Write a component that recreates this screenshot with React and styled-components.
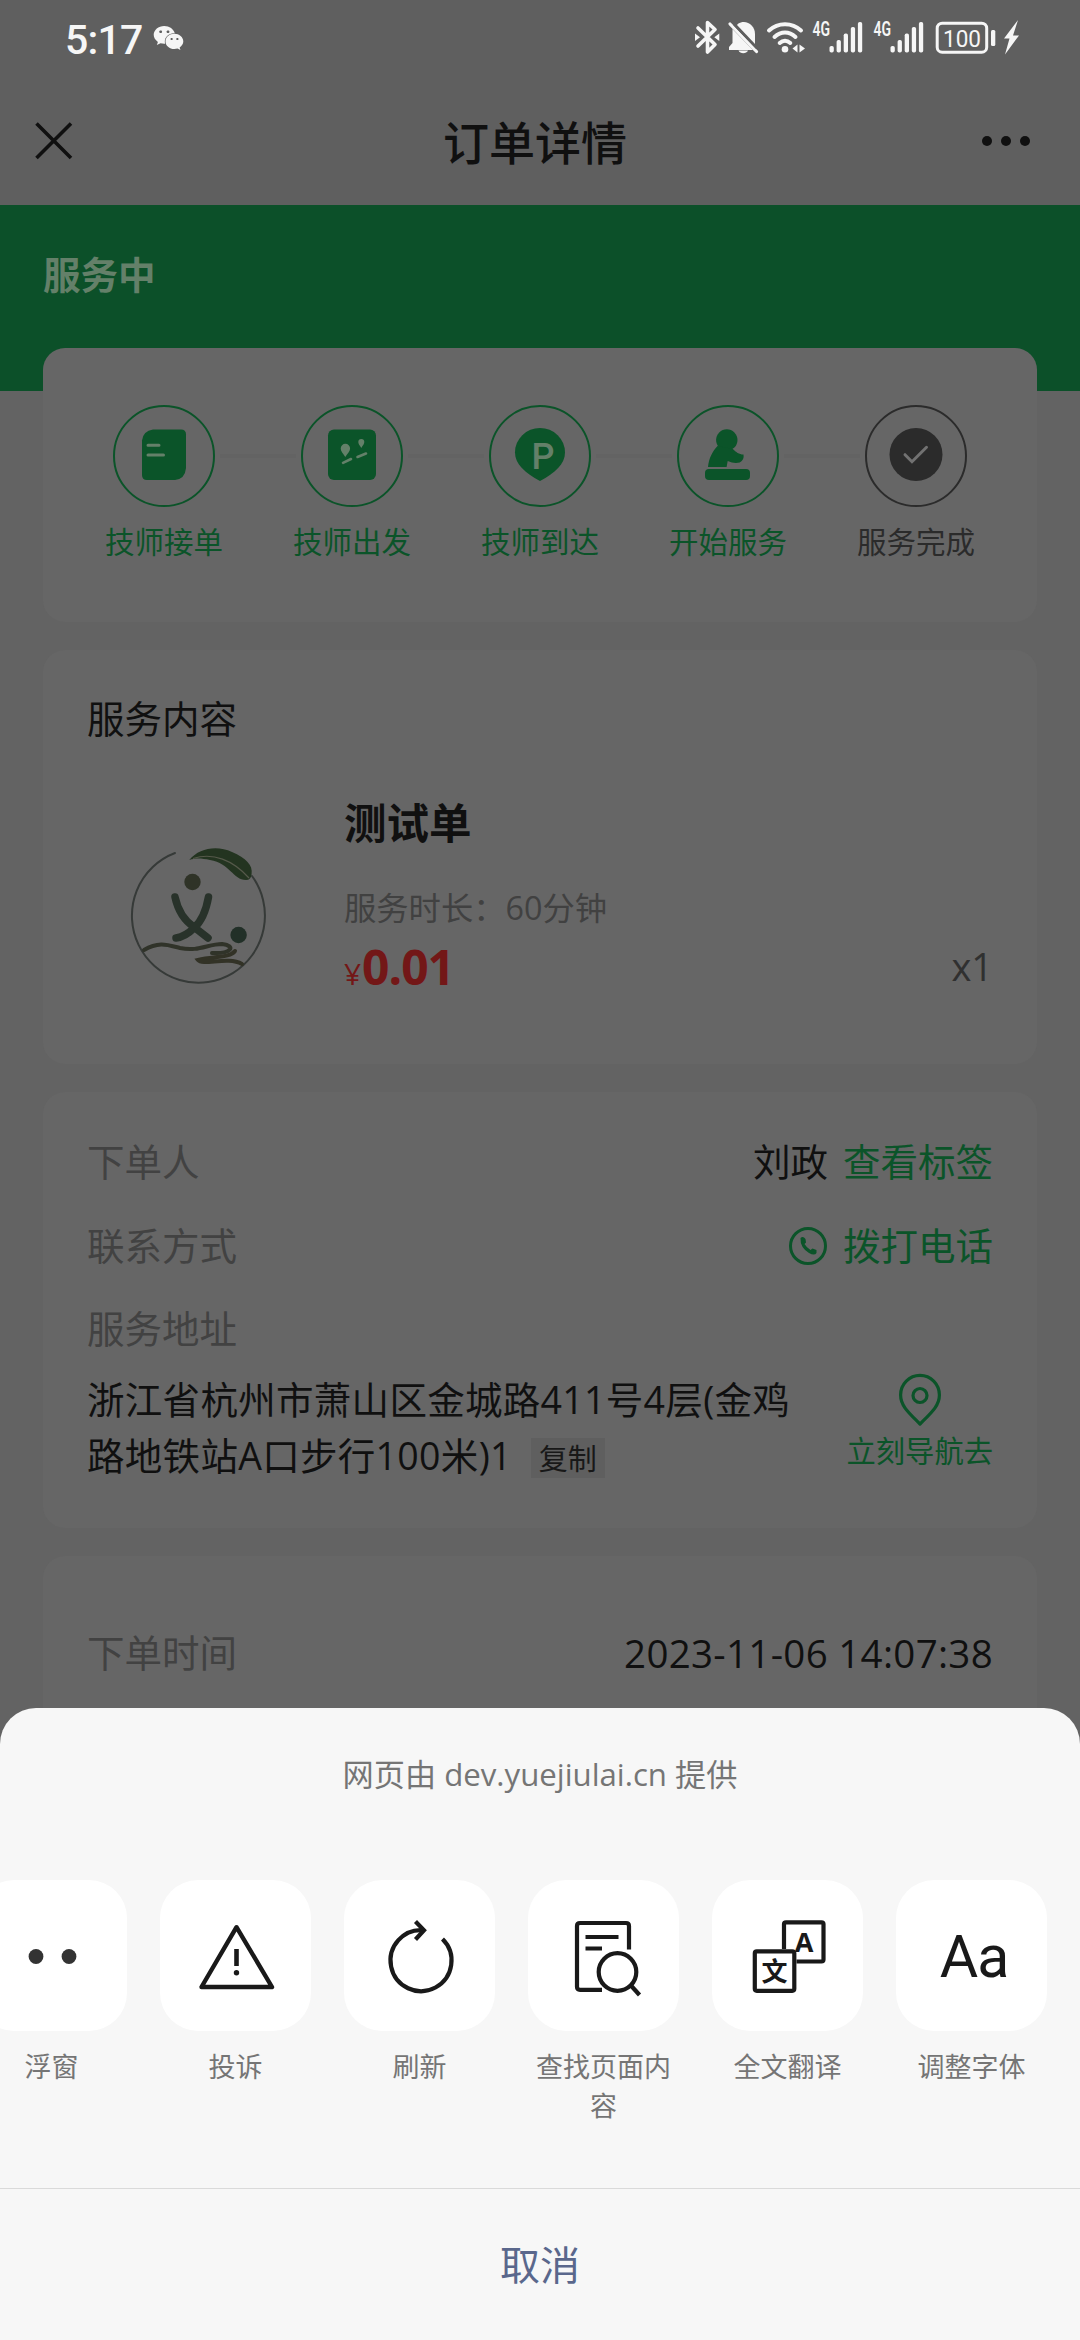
import React from "react";
import styled, { createGlobalStyle } from "styled-components";
import { FaWeixin } from "react-icons/fa";

const GREEN = "#0b5429";
const FONT = `"Open Sans", "Noto Sans CJK SC", sans-serif`;

const GlobalStyle = createGlobalStyle`
  *, *::before, *::after { box-sizing: border-box; }
  body { margin: 0; background: #636363; }
  button { font: inherit; border: 0; padding: 0; background: none; }
  svg { display: block; flex: none; }
`;

const Screen = styled.div`
  position: relative;
  width: 1080px;
  height: 2340px;
  overflow: hidden;
  background: #636363;
  color: #101010;
  font-family: ${FONT};
  font-size: 37.5px;
  line-height: 56px;
`;

/* ---------- top bars ---------- */

const StatusBar = styled.div`
  display: flex;
  align-items: center;
  height: 76px;
  padding: 0 59px 0 65px;
  background: #5f5f5f;
  color: #f6f6f6;
`;

const Clock = styled.span`
  width: 88px;
  padding-top: 3px;
  font-family: Roboto, sans-serif;
  font-size: 41px;
  font-weight: 500;
  line-height: 76px;
  letter-spacing: -0.8px;
`;

const WechatIcon = styled(FaWeixin)`
  width: 31px;
  height: 28px;
`;

const StatusIcons = styled.div`
  display: flex;
  margin-left: auto;
`;

const NavBar = styled.header`
  display: grid;
  grid-template-columns: 200px 1fr 200px;
  align-items: center;
  height: 129px;
  padding: 0 49px 0 35px;
  background: #5f5f5f;
`;

const NavTitle = styled.h1`
  margin: 2px 0 0 4px;
  text-align: center;
  font-size: 46px;
  font-weight: 500;
  line-height: 60px;
`;

const NavButton = styled.button`
  justify-self: ${(p) => p.$side};
`;

/* ---------- order page ---------- */

const Banner = styled.div`
  height: 186px;
  padding: 42px 43px;
  background: #0c5029;
  color: #648069;
  font-size: 37.5px;
  font-weight: 700;
`;

const Cards = styled.main`
  display: flex;
  flex-direction: column;
  gap: 28px;
  margin-top: -43px;
  padding: 0 43px;
`;

const Card = styled.section`
  height: ${(p) => p.$height}px;
  padding: ${(p) => p.$pad || "0 44px"};
  border-radius: 22px;
  background: #666666;
`;

const Steps = styled.ol`
  display: flex;
  justify-content: space-between;
  list-style: none;
  margin: 0;
  padding: 0;
`;

const Step = styled.li`
  display: flex;
  flex-direction: column;
  align-items: center;
  gap: 15px;
  width: 120px;
  color: ${(p) => (p.$done ? GREEN : "#2b2b2b")};
  font-size: 29.5px;
  line-height: 40px;
  white-space: nowrap;
`;

const StepCircle = styled.div`
  display: flex;
  width: 102px;
  height: 102px;
  border: 2px solid currentColor;
  border-radius: 50%;
  align-items: center;
  justify-content: center;
`;

const StepLine = styled.li`
  flex: 1;
  height: 4px;
  margin: 49px -4px 0;
  background: #636363;
`;

const CardTitle = styled.h2`
  margin: 0;
  font-size: 37.5px;
  font-weight: 400;
  line-height: 56px;
`;

const Product = styled.div`
  display: flex;
  margin-top: 44px;
`;

const ProductPicture = styled.div`
  width: 257px;
  padding: 52px 0 0 38px;
`;

const ProductInfo = styled.div`
  flex: 1;
  display: flex;
  flex-direction: column;
`;

const ProductName = styled.strong`
  font-size: 42.5px;
  line-height: 64px;
`;

const Duration = styled.span`
  margin-top: 30px;
  color: #414141;
  font-size: 32.3px;
  line-height: 44px;
`;

const PriceRow = styled.div`
  display: flex;
  justify-content: space-between;
  margin-top: 8px;
  line-height: 60px;
`;

const Price = styled.span`
  color: #731717;
  font-size: 48px;
  font-weight: 700;
  letter-spacing: -1px;
`;

const Currency = styled.small`
  display: inline-block;
  width: 18px;
  font-size: 30px;
  font-weight: 400;
`;

const Quantity = styled.span`
  color: #303030;
  font-size: 38px;
  line-height: 58px;
`;

const InfoRow = styled.div`
  display: flex;
  align-items: center;
  height: 56px;
  margin-bottom: ${(p) => p.$gap || 0}px;
`;

const InfoLabel = styled.span`
  margin-right: auto;
  color: #424242;
`;

const GreenLink = styled.a`
  margin-left: 15px;
  color: ${GREEN};
`;

const DateText = styled.span`
  font-size: 38.5px;
  letter-spacing: 0.3px;
`;

const AddressRow = styled.div`
  display: flex;
  justify-content: space-between;
  white-space: nowrap;
`;

const Address = styled.div`
  letter-spacing: 0.3px;
`;

const CopyButton = styled.button`
  height: 40px;
  margin-left: 19px;
  padding: 1px 8px 0;
  background: #5f5f5f;
  color: #181818;
  font-size: 29px;
  line-height: 40px;
`;

const Navigate = styled.div`
  display: flex;
  flex-direction: column;
  align-items: center;
  gap: 3px;
  color: ${GREEN};
  font-size: 29.3px;
  line-height: 40px;
`;

/* ---------- bottom sheet ---------- */

const Sheet = styled.div`
  position: absolute;
  left: 0;
  right: 0;
  bottom: 0;
  display: flex;
  flex-direction: column;
  height: 632px;
  overflow: hidden;
  border-radius: 36px 36px 0 0;
  background: #f7f7f7;
`;

const SheetTitle = styled.p`
  margin: 44px 0 0;
  color: #757575;
  font-size: 31.2px;
  line-height: 44px;
  text-align: center;
`;

const Actions = styled.div`
  display: flex;
  gap: 33px;
  height: 308px;
  margin: 84px 0 0 -24px;
`;

const Action = styled.div`
  flex: none;
  width: 151px;
`;

const ActionTile = styled.div`
  width: 151px;
  height: 151px;
  border-radius: 38px;
  background: #ffffff;
  color: #191919;
`;

const ActionLabel = styled.div`
  margin-top: 16px;
  padding: 0 7px;
  color: #757575;
  font-size: 27px;
  line-height: 39px;
  text-align: center;
`;

const Cancel = styled.button`
  flex: 1;
  padding-top: 1px;
  border-top: 1px solid #dadada;
  color: #5a678c;
  font-size: 40px;
`;

/* ---------- drawings ---------- */

const Bars = ({ x }) => (
  <g transform={`translate(${x} 0)`}>
    <text x="-17" y="36" fontSize="20" fontWeight="600" fontFamily="Roboto" textLength="17.5" lengthAdjust="spacingAndGlyphs">4G</text>
    {[46, 40, 33.5, 27, 22].map((top, i) => (
      <rect key={top} x={i * 7.1} y={top} width="4.3" height={52.5 - top} rx="1.8" />
    ))}
  </g>
);

const StatusDrawing = () => (
  <svg width="330" height="76" viewBox="690 0 330 76" fill="#f6f6f6">
    <g fill="none" stroke="#f6f6f6" strokeWidth="3.6" strokeLinejoin="round" strokeLinecap="round">
      <path d="M697 28 L714 44.5 L706.5 52 V22.500 L714 29.500 L697 46" />
    </g>
    <path d="M694 33.500 L699 37.300 L694 41 Z M718.300 33.500 L713.300 37.300 L718.300 41 Z" />
    <path d="M737 23.700 C745 19 754 25 754 34 V44 L736 25 Z" />
    <path d="M731.500 29 L752 50 H728 V47 L731.500 43 Z" />
    <path d="M737.500 50.500 H747 C745.500 54 739 54 737.500 50.500 Z" />
    <path d="M729 24 L755.500 51.500" stroke="#f6f6f6" strokeWidth="3.200" strokeLinecap="round" />
    <path d="M733 24.500 L756 48.500" stroke="#5f5f5f" strokeWidth="2" />
    <g fill="none" stroke="#f6f6f6" strokeWidth="4" strokeLinecap="round">
      <path d="M768 30.500 C777 22 791 22 800 30.500" />
      <path d="M773.500 37 C780 31 788 31 794.500 37" />
      <path d="M778.700 43 C782 40 786 40 789.300 43" />
    </g>
    <circle cx="784" cy="49.300" r="3.300" />
    <path d="M796.500 44.500 V52.500 L791.500 48.500 Z M798.500 44.500 V52.500 L804 48.500 Z" />
    <Bars x={828.5} />
    <Bars x={889.5} />
    <rect x="936.200" y="23.200" width="49.500" height="29" rx="5" fill="none" stroke="#f6f6f6" strokeWidth="3" />
    <rect x="990" y="30" width="4.300" height="16" rx="1.500" />
    <text x="961" y="46.500" fontSize="24" fontWeight="400" fontFamily="Roboto" textAnchor="middle" textLength="38" lengthAdjust="spacingAndGlyphs">100</text>
    <path d="M1017 20 L1003 38.500 H1008.500 L1004 54.500 L1018 35.500 H1012 Z" />
  </svg>
);

const CloseIcon = () => (
  <svg width="38" height="38" viewBox="0 0 38 38" stroke="#101010" strokeWidth="3.600">
    <path d="M1.500 1.500 L36 36 M36 1.500 L1.500 36" />
  </svg>
);

const MoreIcon = () => (
  <svg width="50" height="12" viewBox="0 0 50 12" fill="#101010">
    <circle cx="6" cy="6" r="5" />
    <circle cx="25" cy="6" r="5" />
    <circle cx="44" cy="6" r="5" />
  </svg>
);

const STEP_MARK = "#648069";

const stepIcons = {
  accept: (
    <>
      <path d="M39 23.500 H67 Q72 23.500 72 28.500 V62 Q71 73 61 74 H33 Q28 74 28 69 V34.500 Q29 25 39 23.500 Z" fill={GREEN} />
      <path d="M34 39.300 H45 M34 49 H49.500" stroke={STEP_MARK} strokeWidth="3" strokeLinecap="round" />
    </>
  ),
  depart: (
    <>
      <rect x="26" y="23.500" width="48" height="50.500" rx="6" fill={GREEN} />
      <path d="M43.300 51 C41 47.500 38.700 45 38.700 42.500 A4.700 4.700 0 0 1 48.100 42.500 C48.100 45 45.600 47.500 43.300 51 Z M59.300 42 C57.500 39 56.300 38 56.300 36 A3 3 0 0 1 62.300 36 C62.300 38 61 39 59.300 42 Z" fill={STEP_MARK} />
      <path d="M41 56.800 L49 53 M55.500 51 L64 47.500" stroke={STEP_MARK} strokeWidth="2.600" strokeLinecap="round" />
    </>
  ),
  arrive: (
    <>
      <path d="M50 75 C35 67 25 58 25 46.500 A25 24.500 0 0 1 75 46.500 C75 58 65 67 50 75 Z" fill={GREEN} />
      <text x="53" y="62.500" fontSize="36" fontWeight="500" fontFamily="Roboto" textAnchor="middle" fill={STEP_MARK}>P</text>
    </>
  ),
  start: (
    <>
      <circle cx="48.800" cy="34" r="10.700" fill={GREEN} />
      <path d="M39.500 40 C34 46 31 52 30 61 H48.600 L49.700 55 C54 57 58 57.500 61.700 56.500 Q66.500 54 65.500 48.500 C61 48.500 58 46 54.800 43 Z" fill={GREEN} />
      <rect x="27" y="63" width="45" height="11" rx="4" fill={GREEN} />
    </>
  ),
  finish: (
    <>
      <circle cx="50" cy="48.500" r="26.500" fill="#2b2b2b" />
      <path d="M39 48.700 L46 55.700 L60.500 41.300" fill="none" stroke="#727272" strokeWidth="3" strokeLinecap="round" />
    </>
  ),
};

const StepIcon = ({ name }) => (
  <svg width="100" height="100" viewBox="0 0 100 100">{stepIcons[name]}</svg>
);

const BrandLogo = () => (
  <svg width="146" height="146" viewBox="0 0 146 146" fill="none">
    <path d="M50 10 A66.500 67 0 1 0 127 33" stroke="#363a38" strokeWidth="2" strokeLinecap="round" />
    <path d="M64.300 17 C74 5 92 2 107 9 C121 15 128 22 126.600 31 Q126 37 121 37 C108 37 105 20 85 17 C76 15 70 15 64.300 17 Z" fill="#233420" />
    <path d="M68 15.500 C88 9 108 17 124 35" stroke="#55594a" strokeWidth="1.200" />
    <circle cx="67.500" cy="39" r="8.200" fill="#2f3327" />
    <path d="M50 54 C53 68 60 78 69 84 L83 95 M83.500 54 C81 68 77 78 69 85 C64 90 58 94 51 95" stroke="#28322a" strokeWidth="7.500" strokeLinecap="round" />
    <circle cx="113.600" cy="92" r="8.200" fill="#223028" />
    <path d="M19 107 C34 98 43 102 55 105 C73 109 83 101 97 101 C112 103 106 111 87 110" stroke="#303329" strokeWidth="4" strokeLinecap="round" />
    <path d="M110 108 C105 115 89 113 73 117 C78 123 103 113 117 121" stroke="#323226" strokeWidth="4" strokeLinecap="round" />
  </svg>
);

const PhoneIcon = () => (
  <svg width="40" height="40" viewBox="0 0 40 40">
    <circle cx="20" cy="20" r="17.500" fill="none" stroke={GREEN} strokeWidth="3" />
    <path d="M12.500 12 Q15 9.500 17.500 13 L18 16.500 L16.500 18 Q18.500 21.500 22.500 24 L24.500 22.500 L28.500 24 V27 Q26.500 30 21 27 Q12 21.500 12.500 12 Z" fill={GREEN} />
  </svg>
);

const PinIcon = () => (
  <svg width="46" height="56" viewBox="0 0 46 56" fill="none" stroke={GREEN} strokeWidth="3.200">
    <path d="M23 52 C12 41 3.600 34 3.600 23 A19.400 19.600 0 0 1 42.400 23 C42.400 34 34 41 23 52 Z" strokeLinejoin="round" />
    <circle cx="23" cy="23.500" r="7" />
  </svg>
);

const actionIcons = {
  float: (
    <g fill="#333333">
      <circle cx="60" cy="76.500" r="7.400" />
      <circle cx="93" cy="76.500" r="7.400" />
    </g>
  ),
  report: (
    <>
      <path d="M76.500 47.200 L112 107 H41.500 Z" fill="none" stroke="currentColor" strokeWidth="4.400" strokeLinejoin="round" />
      <path d="M76.500 69 V86" stroke="currentColor" strokeWidth="4.600" />
      <circle cx="76.500" cy="92.700" r="2.700" fill="currentColor" />
    </>
  ),
  refresh: (
    <g fill="none" stroke="currentColor" strokeWidth="4.200">
      <path d="M80 50.300 A30.500 30.500 0 1 0 98.500 59" />
      <path d="M71.500 41.500 L80 50.300 L71.500 59.500" />
    </g>
  ),
  find: (
    <g fill="none" stroke="currentColor" strokeWidth="4.200">
      <path d="M74 109.800 H52 Q49 109.800 49 106.800 V46 Q49 43 52 43 H98 Q101 43 101 46 V69.500" />
      <path d="M57.500 57 H90.500 M57.500 68.500 H74" />
      <circle cx="89.500" cy="92" r="18.800" />
      <path d="M102.500 105 L111.500 115" />
    </g>
  ),
  translate: (
    <g transform="translate(0.5 0)">
      <g fill="none" stroke="currentColor" strokeWidth="4.200">
        <path d="M71.500 69 V44 Q71.500 42.300 73.500 42.300 H109 Q111 42.300 111 44 V79.500 Q111 81.500 109 81.500 H84" />
        <rect x="42.300" y="71.300" width="39.500" height="39.500" rx="2" />
      </g>
      <text x="91.500" y="72" fontFamily="Open Sans" fontSize="27" fontWeight="700" textAnchor="middle" fill="currentColor">A</text>
      <text x="62" y="100.500" fontFamily="Noto Sans CJK SC" fontSize="26" fontWeight="700" textAnchor="middle" fill="currentColor">文</text>
    </g>
  ),
  font: (
    <text x="78" y="97" fontFamily="Roboto" fontSize="59" textAnchor="middle" letterSpacing="-1" fill="currentColor">Aa</text>
  ),
};

/* ---------- data ---------- */

const steps = [
  { icon: "accept", label: "技师接单", done: true },
  { icon: "depart", label: "技师出发", done: true },
  { icon: "arrive", label: "技师到达", done: true },
  { icon: "start", label: "开始服务", done: true },
  { icon: "finish", label: "服务完成", done: false },
];

const actions = [
  { icon: "float", label: "浮窗" },
  { icon: "report", label: "投诉" },
  { icon: "refresh", label: "刷新" },
  { icon: "find", label: "查找页面内容" },
  { icon: "translate", label: "全文翻译" },
  { icon: "font", label: "调整字体" },
];

export default function App() {
  return (
    <Screen>
      <GlobalStyle />
      <StatusBar>
        <Clock>5:17</Clock>
        <WechatIcon />
        <StatusIcons>
          <StatusDrawing />
        </StatusIcons>
      </StatusBar>
      <NavBar>
        <NavButton $side="start"><CloseIcon /></NavButton>
        <NavTitle>订单详情</NavTitle>
        <NavButton $side="end"><MoreIcon /></NavButton>
      </NavBar>

      <Banner>服务中</Banner>
      <Cards>
        <Card $height={274} $pad="57px 61px 0">
          <Steps>
            {steps.map((s, i) => (
              <React.Fragment key={s.icon}>
                {i > 0 && <StepLine />}
                <Step $done={s.done}>
                  <StepCircle><StepIcon name={s.icon} /></StepCircle>
                  {s.label}
                </Step>
              </React.Fragment>
            ))}
          </Steps>
        </Card>

        <Card $height={414} $pad="41px 44px 0">
          <CardTitle>服务内容</CardTitle>
          <Product>
            <ProductPicture><BrandLogo /></ProductPicture>
            <ProductInfo>
              <ProductName>测试单</ProductName>
              <Duration>服务时长：60分钟</Duration>
              <PriceRow>
                <Price><Currency>¥</Currency>0.01</Price>
                <Quantity>x1</Quantity>
              </PriceRow>
            </ProductInfo>
          </Product>
        </Card>

        <Card $height={436} $pad="42px 44px 0">
          <InfoRow $gap={28}>
            <InfoLabel>下单人</InfoLabel>
            刘政
            <GreenLink>查看标签</GreenLink>
          </InfoRow>
          <InfoRow $gap={27}>
            <InfoLabel>联系方式</InfoLabel>
            <PhoneIcon />
            <GreenLink>拨打电话</GreenLink>
          </InfoRow>
          <InfoRow $gap={15}>
            <InfoLabel>服务地址</InfoLabel>
          </InfoRow>
          <AddressRow>
            <Address>
              浙江省杭州市萧山区金城路411号4层(金鸡
              <br />
              路地铁站A口步行100米)1
              <CopyButton>复制</CopyButton>
            </Address>
            <Navigate>
              <PinIcon />
              立刻导航去
            </Navigate>
          </AddressRow>
        </Card>

        <Card $height={300} $pad="69px 44px 0">
          <InfoRow>
            <InfoLabel>下单时间</InfoLabel>
            <DateText>2023-11-06 14:07:38</DateText>
          </InfoRow>
        </Card>
      </Cards>

      <Sheet>
        <SheetTitle>网页由 dev.yuejiulai.cn 提供</SheetTitle>
        <Actions>
          {actions.map((a) => (
            <Action key={a.icon}>
              <ActionTile>
                <svg width="151" height="151" viewBox="0 0 151 151">{actionIcons[a.icon]}</svg>
              </ActionTile>
              <ActionLabel>{a.label}</ActionLabel>
            </Action>
          ))}
        </Actions>
        <Cancel>取消</Cancel>
      </Sheet>
    </Screen>
  );
}
